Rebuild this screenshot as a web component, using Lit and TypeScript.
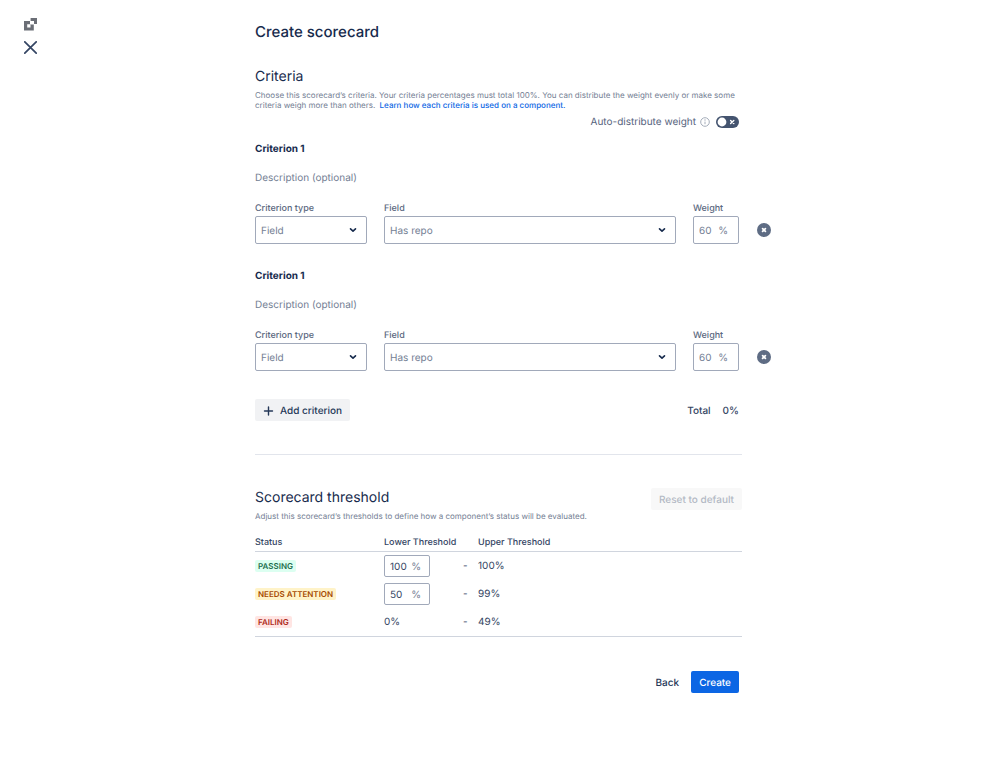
import { LitElement, html, svg, css } from "lit";
import { customElement, property, state } from "lit/decorators.js";

const chevron = svg`<path d="M1.5 1.8 4 4.2 6.5 1.8" fill="none" stroke="#172b4d" stroke-width="1.6" stroke-linecap="round" stroke-linejoin="round"/>`;

const shared = css`
  * { box-sizing: border-box; }
  h1, h2, h3, p { margin: 0; font-weight: 400; }
  input, select, button { font: inherit; color: inherit; margin: 0; text-rendering: inherit; }
  svg { display: block; }
  .percent-box {
    display: flex;
    align-items: center;
    width: 46px;
    height: 28px;
    padding: 1px 10px 0 5px;
    border: 1px solid #a1a9ba;
    border-radius: 2px;
    background: #fff;
    color: #748094;
  }
  .percent-box input {
    flex: 1;
    min-width: 0;
    width: 100%;
    padding: 0;
    border: 0;
    outline: 0;
    background: none;
  }
`;

@customElement("criterion-row")
export class CriterionRow extends LitElement {
  @property() heading = "Criterion 1";
  @property() uid = "a";

  static styles = [shared, css`
    :host { display: block; }
    .heading { font-size: 10px; line-height: 16px; font-weight: 700; color: #172b4d; }
    .description {
      display: block;
      width: 100%;
      height: 16px;
      margin-top: 13px;
      padding: 0;
      border: 0;
      outline: 0;
      background: none;
      line-height: 16px;
    }
    .description::placeholder { color: #748094; opacity: 1; }
    .fields {
      display: grid;
      grid-template-columns: 112px minmax(0, 1fr) 46px 15px;
      column-gap: 17px;
      margin: 16px -29px 0 0;
    }
    .label { display: block; padding-top: 1px; margin-bottom: 1px; font-size: 9px; line-height: 12px; font-weight: 500; color: #5b6880; }
    .select-wrap { display: grid; align-items: center; }
    .select-wrap > * { grid-area: 1 / 1; }
    .select-wrap svg { justify-self: end; margin-right: 10px; pointer-events: none; }
    .select {
      appearance: none;
      width: 100%;
      height: 28px;
      padding: 1px 24px 0 5px;
      border: 1px solid #a1a9ba;
      border-radius: 2px;
      background: #fff;
      color: #748094;
    }
    .remove {
      align-self: end;
      justify-self: end;
      width: 14px;
      height: 14px;
      margin-bottom: 7px;
      padding: 0;
      border: 0;
      background: none;
      cursor: pointer;
    }
  `];

  render() {
    const id = this.uid;
    return html`
      <h3 class="heading">${this.heading}</h3>
      <input class="description" type="text" aria-label="Description" placeholder="Description (optional)">
      <div class="fields">
        <div>
          <label class="label" for="type-${id}">Criterion type</label>
          <div class="select-wrap">
            <select class="select" id="type-${id}"><option>Field</option></select>
            <svg width="8" height="6" viewBox="0 0 8 6">${chevron}</svg>
          </div>
        </div>
        <div>
          <label class="label" for="field-${id}">Field</label>
          <div class="select-wrap">
            <select class="select" id="field-${id}"><option>Has repo</option></select>
            <svg width="8" height="6" viewBox="0 0 8 6">${chevron}</svg>
          </div>
        </div>
        <div>
          <label class="label" for="weight-${id}">Weight</label>
          <div class="percent-box"><input id="weight-${id}" type="text" value="60"><span>%</span></div>
        </div>
        <button class="remove" type="button" aria-label="Remove criterion">
          <svg width="14" height="14" viewBox="0 0 14 14">
            <circle cx="7" cy="7" r="7" fill="#5e6c84"/>
            <path d="M5.6 5.6 8.4 8.4M8.4 5.6 5.6 8.4" stroke="#fff" stroke-width="1.7" stroke-linecap="round"/>
          </svg>
        </button>
      </div>`;
  }
}

interface Threshold { status: string; tone: string; lower: string; editable: boolean; upper: string; }

@customElement("app-root")
export class AppRoot extends LitElement {
  @state() criteria = ["a", "b"];
  @state() thresholds: Threshold[] = [
    { status: "PASSING", tone: "pass", lower: "100", editable: true, upper: "100%" },
    { status: "NEEDS ATTENTION", tone: "warn", lower: "50", editable: true, upper: "99%" },
    { status: "FAILING", tone: "fail", lower: "0%", editable: false, upper: "49%" },
  ];

  static styles = [shared, css`
    :host {
      display: block;
      min-height: 100vh;
      background: #fff;
      color: #344563;
      font-family: Inter, "Liberation Sans", sans-serif;
      font-size: 10px;
      line-height: 16px;
      text-rendering: geometricPrecision;
    }
    .page {
      display: grid;
      grid-template-columns: minmax(60px, 1fr) minmax(0, 487px) minmax(60px, 1fr);
      padding-right: 2px;
    }
    .rail { display: flex; flex-direction: column; align-items: flex-start; gap: 10px; padding: 18px 0 0 24px; }
    .rail-button { padding: 0; border: 0; background: none; cursor: pointer; }
    .main { padding: 20px 0 40px; }
    .title { font-size: 15px; line-height: 24px; font-weight: 500; color: #172b4d; }
    .section-title { font-size: 14px; line-height: 20px; font-weight: 400; color: #172b4d; }
    .criteria-title { margin-top: 23px; }
    .hint { margin-top: 3px; font-size: 8px; line-height: 10px; color: #748094; }
    .link { margin-left: 2px; font-weight: 500; color: #0c66e4; text-decoration: none; }
    .auto { display: flex; align-items: center; justify-content: flex-end; height: 16px; margin: 4px 3px 11px 0; color: #56637d; }
    .info { margin: 0 6px 0 4px; }
    .toggle { display: grid; align-items: center; }
    .toggle > * { grid-area: 1 / 1; }
    .toggle svg { pointer-events: none; }
    .toggle-input { appearance: none; width: 23px; height: 12px; border-radius: 6px; background: #44546f; }
    .criteria { display: flex; flex-direction: column; gap: 24px; }
    .totals { display: flex; align-items: center; justify-content: space-between; margin-top: 28px; padding-right: 3px; }
    .total { display: flex; gap: 12px; padding-top: 1px; font-weight: 500; }
    .button {
      display: flex;
      align-items: center;
      height: 22px;
      padding: 1px 8px 0;
      border: 0;
      border-radius: 2px;
      font-weight: 500;
      color: #253858;
      background: #f1f2f4;
      cursor: pointer;
    }
    .add { gap: 6px; }
    .reset { color: #b3b9c4; background: #f8f8f8; }
    .ghost { background: none; }
    .primary { background: #0c66e4; color: #fff; }
    .rule { height: 1px; margin: 33px 0; border: 0; background: #e2e5ec; }
    .threshold-head { display: flex; align-items: flex-start; justify-content: space-between; }
    .table { width: 100%; margin-top: 14px; border-collapse: separate; border-spacing: 0; table-layout: fixed; border-bottom: 1px solid #d0d5de; }
    .table th { height: 17px; padding: 0; border-bottom: 1px solid #d0d5de; vertical-align: top; text-align: left; font-size: 9px; font-weight: 500; }
    .table td { height: 28px; padding: 0; }
    .col-status { width: 129px; }
    .col-lower { width: 79px; }
    .col-dash { width: 15px; }
    .table .percent-box { height: 22px; padding-right: 8px; }
    .table .percent-box input { color: #344563; }
    .badge { display: block; width: max-content; padding: 0 3px; border-radius: 2px; font-size: 8px; line-height: 12px; font-weight: 600; }
    .pass { background: #dcfff1; color: #216e4e; }
    .warn { background: #fff3c8; color: #a54800; }
    .fail { background: #ffe5e3; color: #ae2a19; }
    .actions { display: flex; justify-content: flex-end; gap: 4px; margin: 34px 3px 0 0; }
  `];

  render() {
    return html`
      <div class="page">
        <nav class="rail">
          <button class="rail-button" type="button" aria-label="Home">
            <svg width="13" height="13" viewBox="0 0 13 13">
              <path fill="#6b6e76" fill-rule="evenodd" d="M0 3H6V6.5H9.8V12.5H0ZM3.2 6.2V9.4H6.5V6.2Z"/>
              <path fill="#6b6e76" d="M6.6 0H13V6H10V3H6.6Z"/>
            </svg>
          </button>
          <button class="rail-button" type="button" aria-label="Close">
            <svg width="13" height="13" viewBox="0 0 13 13">
              <path d="M.8.8 12.2 12.2M12.2.8.8 12.2" stroke="#344563" stroke-width="1.7" stroke-linecap="round"/>
            </svg>
          </button>
        </nav>
        <main class="main">
          <h1 class="title">Create scorecard</h1>
          <h2 class="section-title criteria-title">Criteria</h2>
          <p class="hint">Choose this scorecard’s criteria. Your criteria percentages must total 100%. You can distribute the weight evenly or make some criteria weigh more than others. <a class="link" href="#">Learn how each criteria is used on a component.</a></p>
          <div class="auto">
            <label for="auto">Auto-distribute weight</label>
            <svg class="info" width="10" height="10" viewBox="0 0 10 10">
              <circle cx="5" cy="5" r="4.3" fill="none" stroke="#a5adba" stroke-width="1"/>
              <path d="M5 4.6V7.2" stroke="#a5adba" stroke-width="1"/><circle cx="5" cy="3" r=".7" fill="#a5adba"/>
            </svg>
            <span class="toggle">
              <input class="toggle-input" id="auto" type="checkbox" role="switch">
              <svg width="23" height="12" viewBox="0 0 23 12">
                <circle cx="6" cy="6" r="4.4" fill="#fff"/>
                <path d="M14.6 4.4 17.8 7.6M17.8 4.4 14.6 7.6" stroke="#fff" stroke-width="1.4" stroke-linecap="round"/>
              </svg>
            </span>
          </div>
          <div class="criteria">
            ${this.criteria.map((id) => html`<criterion-row .uid=${id}></criterion-row>`)}
          </div>
          <div class="totals">
            <button class="button add" type="button">
              <svg width="11" height="10" viewBox="0 0 11 10"><path d="M5.5 1V9M1.5 5H9.5" stroke="#253858" stroke-width="1.4" stroke-linecap="round"/></svg>
              Add criterion
            </button>
            <div class="total"><span>Total</span><span>0%</span></div>
          </div>
          <hr class="rule">
          <div class="threshold-head">
            <div>
              <h2 class="section-title">Scorecard threshold</h2>
              <p class="hint">Adjust this scorecard’s thresholds to define how a component’s status will be evaluated.</p>
            </div>
            <button class="button reset" type="button" disabled>Reset to default</button>
          </div>
          <table class="table">
            <thead>
              <tr>
                <th class="col-status">Status</th>
                <th class="col-lower">Lower Threshold</th>
                <th class="col-dash"></th>
                <th>Upper Threshold</th>
              </tr>
            </thead>
            <tbody>
              ${this.thresholds.map((t) => html`
                <tr>
                  <td><span class="badge ${t.tone}">${t.status}</span></td>
                  <td>${t.editable
                    ? html`<div class="percent-box"><input type="text" aria-label="Lower threshold for ${t.status}" .value=${t.lower}><span>%</span></div>`
                    : t.lower}</td>
                  <td>-</td>
                  <td>${t.upper}</td>
                </tr>`)}
            </tbody>
          </table>
          <div class="actions">
            <button class="button ghost" type="button">Back</button>
            <button class="button primary" type="button">Create</button>
          </div>
        </main>
      </div>`;
  }
}
